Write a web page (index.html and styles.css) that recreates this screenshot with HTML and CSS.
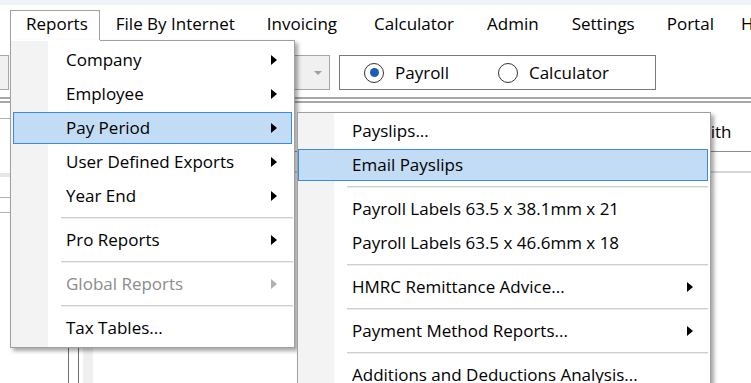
FILE: index.html
```html
<!DOCTYPE html>
<html>
<head>
<meta charset="utf-8">
<link rel="stylesheet" href="styles.css">
</head>
<body>
<div class="screen">
  <div class="topband"></div>
  <nav class="menubar">
    <div class="mitem tab">Reports</div>
    <div class="mitem">File By Internet</div>
    <div class="mitem wide">Invoicing</div>
    <div class="mitem roomy">Calculator</div>
    <div class="mitem roomy">Admin</div>
    <div class="mitem">Settings</div>
    <div class="mitem narrow">Portal</div>
    <div class="mitem">Help</div>
  </nav>
  <div class="toolbar">
    <div class="combo combo-left"></div>
    <div class="combo combo-mid"><span class="caret"></span></div>
    <div class="group">
      <span class="radio checked"></span><span class="rlabel">Payroll</span>
      <span class="radio second"></span><span class="rlabel">Calculator</span>
    </div>
  </div>
  <div class="rule"></div>
  <div class="content">
    <div class="leftpane">
      <div class="lp-a"></div>
      <div class="lp-b"></div>
      <div class="lp-band"></div>
      <div class="lp-c"></div>
      <div class="lp-d"></div>
      <div class="lp-cols">
        <div class="col c1"></div>
        <div class="col c2"></div>
        <div class="col c3"></div>
      </div>
    </div>
    <div class="rightpane">
      <div class="rp-head"><span class="htext">With</span></div>
      <div class="rp-row"></div>
    </div>
  </div>

  <div class="menu main-menu">
    <div class="item arrow">Company</div>
    <div class="item arrow">Employee</div>
    <div class="item arrow active">Pay Period</div>
    <div class="item arrow">User Defined Exports</div>
    <div class="item arrow">Year End</div>
    <div class="sep"></div>
    <div class="item arrow">Pro Reports</div>
    <div class="sep"></div>
    <div class="item arrow disabled">Global Reports</div>
    <div class="sep"></div>
    <div class="item">Tax Tables...</div>
  </div>

  <div class="menu sub-menu">
    <div class="item">Payslips...</div>
    <div class="item active">Email Payslips</div>
    <div class="sep"></div>
    <div class="item">Payroll Labels 63.5 x 38.1mm x 21</div>
    <div class="item">Payroll Labels 63.5 x 46.6mm x 18</div>
    <div class="sep"></div>
    <div class="item arrow">HMRC Remittance Advice...</div>
    <div class="sep"></div>
    <div class="item arrow">Payment Method Reports...</div>
    <div class="sep"></div>
    <div class="item">Additions and Deductions Analysis...</div>
  </div>
</div>
</body>
</html>
```

FILE: styles.css
```css
* { box-sizing: border-box; }
html, body { margin: 0; padding: 0; }
body {
  width: 751px;
  height: 383px;
  overflow: hidden;
  background: #fff;
  font-family: "Open Sans", "Noto Sans", sans-serif;
  font-size: 17px;
  color: #000;
}
.screen {
  position: relative;
  width: 751px;
  height: 383px;
  overflow: hidden;
}
.topband { height: 5px; background: #eef3fa; }

.menubar {
  display: flex;
  height: 37px;
  white-space: nowrap;
}
.mitem {
  line-height: 38px;
  height: 37px;
  padding: 0 16px;
}
.mitem.wide { padding-right: 21px; }
.mitem.roomy { padding-right: 17px; }
.mitem.narrow { padding-right: 11px; }
.mitem.tab {
  margin-left: 10px;
  margin-top: 5px;
  height: 32px;
  line-height: 26px;
  padding: 0 11px 0 15px;
  border: 1px solid #a0a0a0;
  border-bottom: none;
  background: #fff;
}

.toolbar {
  height: 55px;
  padding-top: 13px;
  display: flex;
}
.combo {
  height: 35px;
  border: 1px solid #a6a6a6;
  background: #f0f0f0;
  position: relative;
}
.combo-left { width: 9px; border-left: none; }
.combo-mid { width: 130px; margin-left: 191px; }
.caret {
  position: absolute;
  right: 7px;
  top: 15px;
  border-top: 4px solid #a0a0a0;
  border-left: 4px solid transparent;
  border-right: 4px solid transparent;
}
.group {
  margin-left: 9px;
  width: 317px;
  height: 35px;
  border: 1px solid #7a7a7a;
  display: flex;
  align-items: center;
  padding-left: 24px;
}
.radio {
  width: 20px;
  height: 20px;
  border: 1px solid #333;
  border-radius: 50%;
  background: #fff;
  position: relative;
  flex: none;
}
.radio.checked::after {
  content: "";
  position: absolute;
  left: 4.5px; top: 4.5px;
  width: 9px; height: 9px;
  border-radius: 50%;
  background: #1a5fb4;
}
.rlabel { margin-left: 11px; }
.radio.second { margin-left: 49px; }

.rule {
  height: 6px;
  border-top: 2px solid #a8a8a8;
  border-bottom: 2px solid #a8a8a8;
}

.content { display: flex; height: 280px; }
.leftpane { width: 96px; display: flex; flex-direction: column; }
.lp-a { height: 16px; border-bottom: 1px solid #b0b0b0; }
.lp-b { height: 54px; }
.lp-band { height: 4px; background: #e6e6e6; }
.lp-c { height: 21px; border-bottom: 1px solid #b0b0b0; }
.lp-d { height: 15px; border-bottom: 1px solid #b0b0b0; }
.lp-cols { flex: 1; display: flex; padding-left: 68px; }
.col.c1 { width: 10px; border-left: 1px solid #6e6e6e; }
.col.c2 { width: 5px; border-left: 1px solid #6e6e6e; }
.col.c3 { width: 10px; background: #efefef; }

.rightpane { flex: 1; }
.rp-head {
  height: 49px;
  border-bottom: 1px solid #8c8c8c;
  display: flex;
  align-items: center;
  padding-left: 599px;
  padding-top: 8px;
}
.rp-row { height: 21px; border-bottom: 2px solid #d6d6d6; }

.menu {
  position: absolute;
  display: flex;
  flex-direction: column;
  background: #fff;
  border: 1px solid #a0a0a0;
  box-shadow: 3px 3px 4px rgba(0, 0, 0, 0.35);
  white-space: nowrap;
}
.main-menu {
  left: 10px;
  top: 40px;
  width: 285px;
  padding: 2px 0 2px;
  background: linear-gradient(to right, #f3f3f3 0 37px, #fff 37px);
}
.main-menu::before {
  content: "";
  position: absolute;
  left: 0;
  top: -1px;
  width: 89px;
  height: 1px;
  background: #fff;
}
.sub-menu {
  left: 297px;
  top: 112px;
  width: 414px;
  padding: 1px 0 2px;
  background: linear-gradient(to right, #f3f3f3 0 36px, #fff 36px);
}
.item {
  position: relative;
  flex: none;
  height: 32px;
  line-height: 30px;
  margin: 1px 2px;
  border: 1px solid transparent;
  padding-left: 52px;
}
.sub-menu .item { margin: 1px 2px 1px 0; padding-left: 53px; }
.item.active { background: #c1dcf4; border-color: #3a8ddc; }
.item.disabled { color: #8d8d8d; }
.item.arrow::after {
  content: "";
  position: absolute;
  right: 14px;
  top: 10px;
  border-left: 6px solid #000;
  border-top: 5px solid transparent;
  border-bottom: 5px solid transparent;
}
.item.disabled::after { border-left-color: #b0b0b0; }
.sep { flex: none; height: 10px; position: relative; margin-left: 50px; margin-right: 1px; }
.sub-menu .sep { margin-left: 49px; margin-right: 2px; }
.sep::before {
  content: "";
  position: absolute;
  left: 0; right: 0;
  top: 4px;
  height: 1px;
  background: #cfcfcf;
  border-bottom: 1px solid #ececec;
  box-sizing: content-box;
}
```
